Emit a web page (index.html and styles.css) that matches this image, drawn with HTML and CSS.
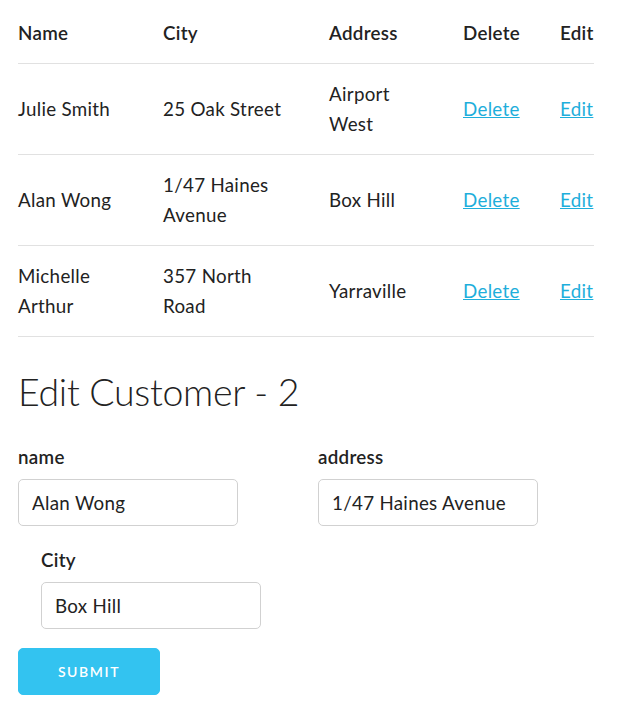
FILE: index.html
```html
<!DOCTYPE html>
<html lang="en">
<head>
<meta charset="utf-8">
<title>Customers</title>
<link rel="stylesheet" href="styles.css">
</head>
<body>
<div class="page">
  <table class="customers">
    <colgroup>
      <col class="c-name"><col class="c-city"><col class="c-address"><col class="c-delete"><col class="c-edit">
    </colgroup>
    <thead>
      <tr><th>Name</th><th>City</th><th>Address</th><th>Delete</th><th>Edit</th></tr>
    </thead>
    <tbody>
      <tr><td>Julie Smith</td><td>25 Oak Street</td><td>Airport West</td><td><a href="#">Delete</a></td><td><a href="#">Edit</a></td></tr>
      <tr><td>Alan Wong</td><td>1/47 Haines Avenue</td><td>Box Hill</td><td><a href="#">Delete</a></td><td><a href="#">Edit</a></td></tr>
      <tr><td>Michelle Arthur</td><td>357 North Road</td><td>Yarraville</td><td><a href="#">Delete</a></td><td><a href="#">Edit</a></td></tr>
    </tbody>
  </table>

  <h2 class="title">Edit Customer - 2</h2>

  <form class="edit-form">
    <div class="form-row">
      <div class="field">
        <label class="label" for="name">name</label>
        <input class="input" id="name" type="text" value="Alan Wong">
      </div>
      <div class="field">
        <label class="label" for="address">address</label>
        <input class="input" id="address" type="text" value="1/47 Haines Avenue">
      </div>
    </div>
    <div class="field field-city">
      <label class="label" for="city">City</label>
      <input class="input" id="city" type="text" value="Box Hill">
    </div>
    <button class="submit" type="button">Submit</button>
  </form>
</div>
</body>
</html>
```

FILE: styles.css
```css
* { box-sizing: border-box; }
html, body { margin: 0; padding: 0; background: #fff; }
body {
  font-family: "Lato", "Open Sans", sans-serif;
  font-size: 18.75px;
  line-height: 30px;
  color: #222;
  letter-spacing: 0.3px;
}
.page { padding: 3px 0 0 18px; }

.customers {
  width: 576px;
  border-collapse: collapse;
  border-spacing: 0;
  table-layout: fixed;
  margin-bottom: 30px;
}
.c-name { width: 127px; }
.c-city { width: 166px; }
.c-address { width: 134px; }
.c-delete { width: 97px; }
.c-edit { width: 52px; }

.customers th, .customers td {
  padding: 15px 18px;
  text-align: left;
  border-bottom: 1px solid #E1E1E1;
  vertical-align: middle;
}
.customers th:first-child, .customers td:first-child { padding-left: 0; }
.customers th:last-child, .customers td:last-child { padding-right: 0; }
.customers th { font-weight: 600; }
.customers td { font-weight: 400; }
.customers a { color: #1EAEDB; text-decoration: underline; }

.title {
  margin: 0 0 25px;
  font-size: 37.5px;
  line-height: 50px;
  font-weight: 300;
  letter-spacing: -0.3px;
}

.edit-form { display: flex; flex-direction: column; align-items: flex-start; }
.form-row { display: flex; gap: 80px; }
.field { display: flex; flex-direction: column; margin-bottom: 19px; }
.field-city { margin-left: 23px; }
.label {
  font-weight: 600;
  line-height: 30px;
  margin-bottom: 7px;
}
.input {
  width: 220px;
  height: 47px;
  padding: 7px 13px;
  border: 1px solid #D1D1D1;
  border-radius: 5px;
  font-family: inherit;
  font-size: 18.75px;
  letter-spacing: 0.3px;
  color: #222;
  background: #fff;
  box-shadow: none;
  outline: none;
}
.submit {
  width: 142px;
  height: 47px;
  padding: 0;
  border: 1px solid #33C3F0;
  border-radius: 5px;
  background: #33C3F0;
  color: #fff;
  font-family: inherit;
  font-size: 14px;
  font-weight: 600;
  letter-spacing: 1.6px;
  text-transform: uppercase;
  cursor: pointer;
}
```
